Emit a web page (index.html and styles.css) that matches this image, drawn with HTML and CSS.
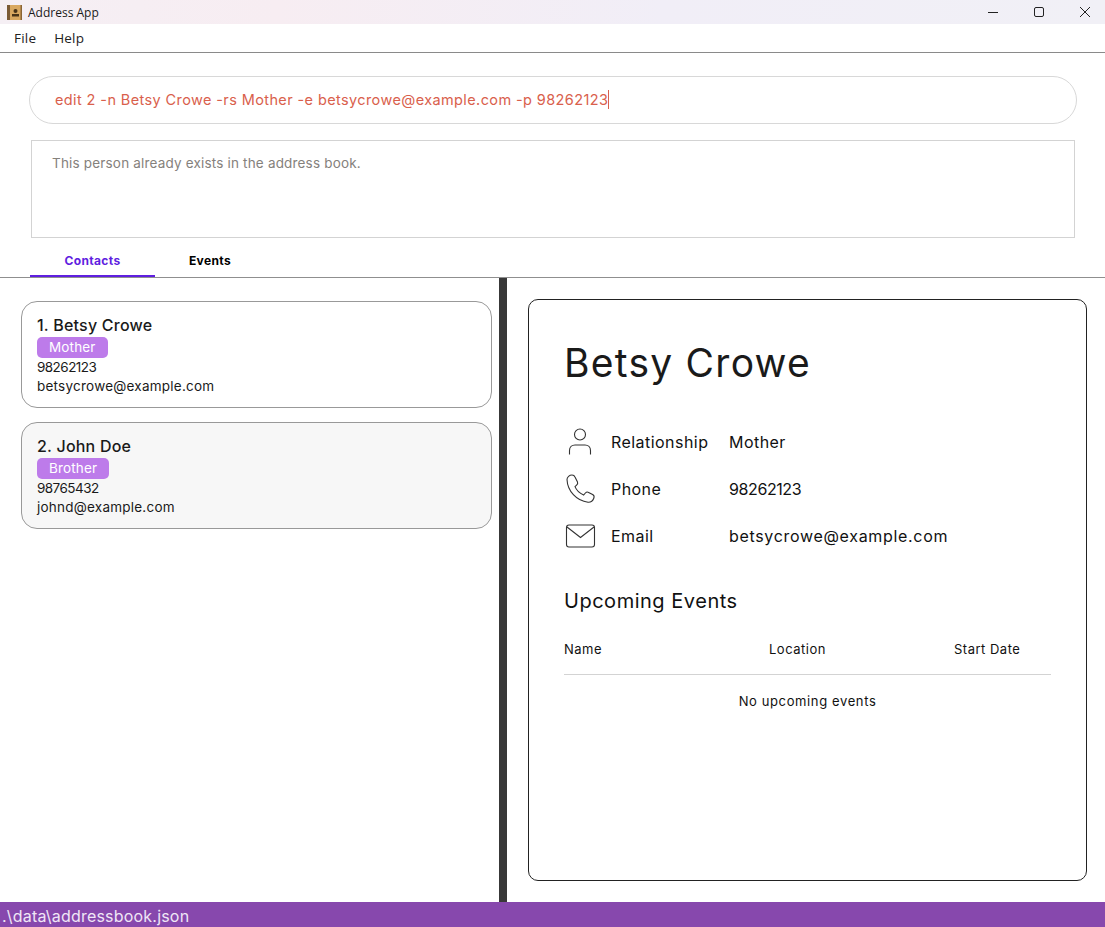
FILE: index.html
```html
<!DOCTYPE html>
<html lang="en">
<head>
<meta charset="utf-8">
<title>Address App</title>
<link rel="stylesheet" href="styles.css">
</head>
<body>
<div class="app">
  <header class="titlebar">
    <div class="title-left">
      <svg class="app-icon" width="15" height="15" viewBox="0 0 15 15"><rect width="15" height="15" fill="#d9a860"/><rect width="3" height="15" fill="#7a5a35"/><rect x="13.5" width="1.5" height="15" fill="#8a6536"/><circle cx="8.5" cy="6" r="2" fill="#4a3418"/><rect x="5" y="9" width="7" height="2.5" fill="#4a3418"/></svg>
      <span class="app-name">Address App</span>
    </div>
    <div class="win-controls">
      <svg width="12" height="12" viewBox="0 0 12 12"><path d="M1 6.5H11" stroke="#222" fill="none"/></svg>
      <svg width="12" height="12" viewBox="0 0 12 12"><rect x="1.5" y="1.5" width="9" height="9" rx="1.5" stroke="#222" fill="none"/></svg>
      <svg width="12" height="12" viewBox="0 0 12 12"><path d="M1 1L11 11M11 1L1 11" stroke="#222" fill="none"/></svg>
    </div>
  </header>
  <nav class="menubar"><span>File</span><span>Help</span></nav>
  <section class="command-area">
    <div class="command-box"><span class="command-text">edit 2 -n Betsy Crowe -rs Mother -e betsycrowe@example.com -p 98262123</span><span class="caret"></span></div>
    <div class="result-box">This person already exists in the address book.</div>
  </section>
  <div class="tabs">
    <div class="tab tab-active">Contacts</div>
    <div class="tab">Events</div>
  </div>
  <main class="split">
    <div class="list-pane">
      <article class="card">
        <div class="card-name">1. Betsy Crowe</div>
        <span class="tag">Mother</span>
        <div class="card-line card-phone">98262123</div>
        <div class="card-line">betsycrowe@example.com</div>
      </article>
      <article class="card card-alt">
        <div class="card-name">2. John Doe</div>
        <span class="tag">Brother</span>
        <div class="card-line card-phone">98765432</div>
        <div class="card-line">johnd@example.com</div>
      </article>
    </div>
    <div class="divider"></div>
    <div class="detail-pane">
      <section class="detail">
        <h1 class="detail-name">Betsy Crowe</h1>
        <div class="info-rows">
          <div class="info-row">
            <svg class="info-icon" width="32" height="32" viewBox="0 0 32 32" fill="none" stroke="#333" stroke-width="1.1"><circle cx="16" cy="8.5" r="5.5"/><path d="M5.5 28.5V24.5C5.5 21 8 19 11 19H21C24 19 26.5 21 26.5 24.5V28.5"/></svg>
            <span class="info-label">Relationship</span><span class="info-value">Mother</span>
          </div>
          <div class="info-row">
            <svg class="info-icon" width="32" height="32" viewBox="0 0 32 32" fill="none" stroke="#333" stroke-width="1.1"><path d="M3 6.5C3 4 5.5 2 8 2C9.5 2 10.5 2.8 11 4L13.5 9C14 10.3 13.6 11.3 12.6 12.2L11 13.6C12.6 17.5 15.5 20.2 19.6 22L21.4 20C22.3 19 23.5 18.8 24.6 19.4L28.6 21.6C30 22.4 30.4 23.8 29.8 25.2C28.8 27.8 26.5 29.4 24 29.2C12.5 28 3.5 18 3 6.5Z"/></svg>
            <span class="info-label">Phone</span><span class="info-value value-phone">98262123</span>
          </div>
          <div class="info-row">
            <svg class="info-icon" width="32" height="32" viewBox="0 0 32 32" fill="none" stroke="#333" stroke-width="1.1"><rect x="2.5" y="5" width="28" height="22" rx="2.5"/><path d="M3 7L16.5 17.5L30 7"/></svg>
            <span class="info-label">Email</span><span class="info-value value-email">betsycrowe@example.com</span>
          </div>
        </div>
        <h2 class="events-title">Upcoming Events</h2>
        <div class="events-head"><span>Name</span><span>Location</span><span>Start Date</span></div>
        <div class="events-empty">No upcoming events</div>
      </section>
    </div>
  </main>
  <footer class="statusbar">.\data\addressbook.json</footer>
</div>
</body>
</html>
```
FILE: styles.css
```css
* { box-sizing: border-box; }
html, body { margin: 0; height: 100%; }
body { font-family: Inter, "Noto Sans", sans-serif; color: #1a1a1a; background: #fff; overflow: hidden; }
.app { width: 1105px; height: 927px; display: flex; flex-direction: column; }
.titlebar { height: 24px; flex: none; display: flex; justify-content: space-between; align-items: center; background: linear-gradient(90deg, #f5eff4 0%, #f7edf2 25%, #f1eef7 60%, #f1f0f6 100%); }
.title-left { display: flex; align-items: center; padding-left: 7px; gap: 6px; }
.app-icon { display: block; }
.app-name { font: 12px "Open Sans", sans-serif; color: #1a1a1a; }
.win-controls { display: flex; gap: 34px; padding-right: 14px; align-items: center; }
.win-controls svg { display: block; }
.menubar { height: 29px; flex: none; display: flex; align-items: center; gap: 18px; padding: 0 0 1px 14px; border-bottom: 1px solid #8a8a8a; font: 13.5px "Open Sans", sans-serif; letter-spacing: 0.2px; color: #222; }
.command-area { flex: none; padding: 23px 28px 0 29px; }
.command-box { height: 48px; border: 1px solid #d8d8d8; border-radius: 24px; display: flex; align-items: center; padding: 0 0 2px 25px; color: #d9604c; font-size: 14.5px; letter-spacing: 0.39px; }
.caret { width: 1px; height: 19px; background: #d9604c; }
.result-box { height: 98px; margin: 16px 2px 0; border: 1px solid #d3d3d3; padding: 14px 20px; font-size: 13.5px; color: #85817c; letter-spacing: 0.18px; }
.tabs { flex: none; height: 40px; padding: 7px 0 0 30px; display: flex; border-bottom: 1px solid #8f8f8f; }
.tab { width: 125px; height: 32px; text-align: center; font-size: 12px; font-weight: 700; line-height: 31px; letter-spacing: 0.35px; color: #000; margin-bottom: -1px; }
.tab + .tab { width: 110px; }
.tab-active { color: #5f1ee0; border-bottom: 2px solid #5f1ee0; }
.split { flex: 1; min-height: 0; display: flex; }
.list-pane { width: 499px; flex: none; padding: 23px 7px 0 21px; display: flex; flex-direction: column; gap: 14px; }
.card { height: 107px; border: 1px solid #999; border-radius: 16px; padding: 12px 15px 0; background: #fff; }
.card-alt { background: #f7f7f7; }
.card-name { font-size: 16px; font-weight: 500; line-height: 22px; letter-spacing: 0.22px; color: #1a1a1a; }
.tag { display: inline-block; height: 21px; line-height: 21px; padding: 0 12px; border-radius: 5px; background: #bd7bea; color: #fff; font-size: 13.5px; letter-spacing: 0.15px; margin-top: 1px; vertical-align: top; }
.card-line { font-size: 13.5px; line-height: 19px; letter-spacing: 0.23px; color: #1a1a1a; }
.card-phone { letter-spacing: -0.55px; }
.divider { width: 8px; flex: none; background: #383838; }
.detail-pane { flex: 1; padding: 21px 18px 21px 21px; min-width: 0; }
.detail { height: 100%; border: 1px solid #222; border-radius: 10px; padding: 35px 35px 0; }
.detail-name { margin: 0; font-size: 39px; font-weight: 400; line-height: 56px; letter-spacing: 1.25px; color: #1a1a1a; }
.info-rows { margin-top: 35px; display: flex; flex-direction: column; gap: 15px; }
.info-row { height: 32px; display: flex; align-items: center; font-size: 16px; letter-spacing: 0.45px; color: #111; }
.info-icon { flex: none; width: 32px; height: 32px; margin-right: 15px; }
.info-label { width: 118px; flex: none; }
.value-phone { letter-spacing: -0.4px; }
.value-email { letter-spacing: 0.68px; }
.events-title { margin: 34px 0 0; font-size: 20px; font-weight: 400; line-height: 30px; letter-spacing: 0.52px; color: #111; }
.events-head { margin-top: 20px; height: 39px; display: grid; grid-template-columns: 205px 185px 1fr; font-size: 13px; line-height: 26px; letter-spacing: 0.5px; border-bottom: 1px solid #d3d3d3; width: 487px; color: #111; }
.events-empty { width: 487px; text-align: center; font-size: 13px; line-height: 20px; letter-spacing: 0.62px; margin-top: 16px; color: #111; }
.statusbar { height: 25px; flex: none; background: #8748ad; color: #f0e6f6; font-size: 16px; line-height: 29px; letter-spacing: 0.2px; padding-left: 2px; overflow: hidden; }
```
